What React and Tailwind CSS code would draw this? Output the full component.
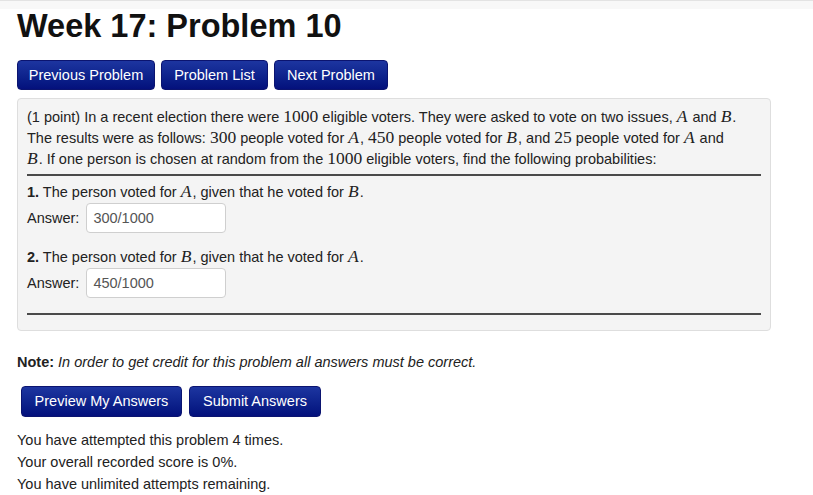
import React from 'react'

const btn =
  'h-[30px] whitespace-nowrap rounded-[4px] border border-[#0b1470] bg-gradient-to-b from-[#1d35a0] to-[#04107c] text-white text-[14.5px] leading-none'

function M({ children }) {
  return <span className="font-['Liberation_Serif',serif] text-[17.5px] leading-[0]">{children}</span>
}

function V({ children }) {
  return <span className="font-['Liberation_Serif',serif] italic text-[17.5px] leading-[0] pr-[1px]">{children}</span>
}

export default function App() {
  return (
    <div className="min-h-[495px] bg-white font-['Liberation_Sans',Arial,sans-serif] text-[#222]">
      <div className="h-[9px] border-t border-[#e3e3e3] bg-[#f8f8f8]" />

      <div className="px-[17px]">
        <h1 className="mt-[1px] text-[32.5px] font-bold leading-[32px] text-[#111]">Week 17: Problem 10</h1>

        <div className="mt-[18px] flex gap-[6px]">
          <button className={`${btn} w-[138px]`}>Previous Problem</button>
          <button className={`${btn} w-[107px]`}>Problem List</button>
          <button className={`${btn} w-[114px]`}>Next Problem</button>
        </div>

        <div className="mt-[8px] w-[754px] rounded-[4px] border border-[#dedede] bg-[#f4f4f4] px-[9px] pt-[8px] pb-[15px] text-[14.5px] leading-[21px]">
          <p>
            (1 point) In a recent election there were <M>1000</M> eligible voters. They were asked to vote on two issues, <V>A</V> and <V>B</V>.
            <br />
            The results were as follows: <M>300</M> people voted for <V>A</V>, <M>450</M> people voted for <V>B</V>, and <M>25</M> people voted for <V>A</V> and
            <br />
            <V>B</V>. If one person is chosen at random from the <M>1000</M> eligible voters, find the following probabilities:
          </p>
          <div className="mt-[4px] h-[2px] bg-[#4a4a4a]" />

          <p className="mt-[6px]">
            <b>1.</b> The person voted for <V>A</V>, given that he voted for <V>B</V>.
          </p>
          <div className="flex items-center gap-[7px]">
            <span>Answer:</span>
            <div className="flex h-[30px] w-[140px] items-center rounded-[4px] border border-[#cfcfcf] bg-white px-[6px] text-[#555]">
              300/1000
            </div>
          </div>

          <p className="mt-[14px]">
            <b>2.</b> The person voted for <V>B</V>, given that he voted for <V>A</V>.
          </p>
          <div className="flex items-center gap-[7px]">
            <span>Answer:</span>
            <div className="flex h-[30px] w-[140px] items-center rounded-[4px] border border-[#cfcfcf] bg-white px-[6px] text-[#555]">
              450/1000
            </div>
          </div>

          <div className="mt-[15px] h-[2px] bg-[#4a4a4a]" />
        </div>

        <p className="mt-[21px] text-[14.5px] leading-[20px]">
          <b>Note:</b> <i>In order to get credit for this problem all answers must be correct.</i>
        </p>

        <div className="mt-[14px] flex gap-[7px] pl-[4px]">
          <button className={`${btn} h-[31px] w-[161px]`}>Preview My Answers</button>
          <button className={`${btn} h-[31px] w-[132px]`}>Submit Answers</button>
        </div>

        <div className="mt-[12px] text-[14.5px] leading-[22px]">
          <p>You have attempted this problem 4 times.</p>
          <p>Your overall recorded score is 0%.</p>
          <p>You have unlimited attempts remaining.</p>
        </div>
      </div>
    </div>
  )
}
